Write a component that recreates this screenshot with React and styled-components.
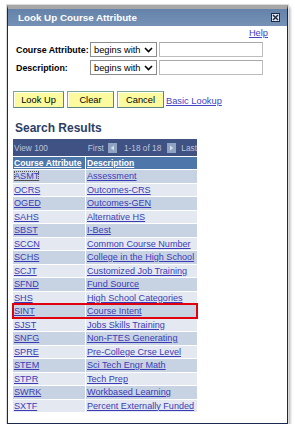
import React from "react";
import styled, { createGlobalStyle } from "styled-components";

const GlobalStyle = createGlobalStyle`
  html, body { margin: 0; padding: 0; background: #ffffff; }
  body { font-family: "Liberation Sans", Arial, sans-serif; }
`;

const Frame = styled.div`
  box-sizing: border-box;
  margin: 5px 0 0 7px;
  width: 281px;
  height: 419px;
  background: #fff;
  border: 1px solid #1b2a4c;
  border-top: 4px solid #a7a7a7;
  box-shadow: 0 0 0 1px #dcdcdc, 2px 2px 3px rgba(0, 0, 0, 0.35);
  display: flex;
  flex-direction: column;
`;

const TitleBar = styled.div`
  height: 17px;
  background: linear-gradient(#6482aa, #7591b5);
  display: flex;
  align-items: center;
  justify-content: space-between;
  padding: 0 7px 0 10px;
`;

const Title = styled.span`
  color: #fff;
  font-weight: bold;
  font-size: 9.8px;
`;

const CloseBox = styled.div`
  width: 7px;
  height: 7px;
  border: 1px solid #1c2a48;
  background: #e4e9f1;
  display: flex;
  align-items: center;
  justify-content: center;
`;

const Body = styled.div`
  padding: 0 0 0 5px;
  display: flex;
  flex-direction: column;
`;

const HelpRow = styled.div`
  margin-top: 2px;
  height: 11px;
  text-align: right;
  padding-right: 19px;
  font-size: 9.3px;
  line-height: 11px;
`;

const Link = styled.a`
  color: ${(p) => p.$color || "#4343c4"};
  text-decoration: underline;
  cursor: pointer;
`;

const Form = styled.div`
  margin: 3px 0 0 3px;
  display: grid;
  grid-template-columns: 74px 67px 106px;
  row-gap: 3px;
  align-items: center;
`;

const Label = styled.div`
  font-weight: bold;
  font-size: 8.9px;
  color: #000;
  white-space: nowrap;
`;

const Select = styled.div`
  box-sizing: border-box;
  height: 15px;
  border: 1px solid #8c8c8c;
  background: #fff;
  display: flex;
  align-items: center;
  justify-content: space-between;
  padding: 0 3px 0 3px;
  font-size: 9.3px;
  color: #000;
  white-space: nowrap;
`;

const TextInput = styled.div`
  box-sizing: border-box;
  margin-left: 2px;
  height: 15px;
  border: 1px solid #bdbdbd;
  border-top-color: #a8a8a8;
  background: #fff;
`;

const ButtonRow = styled.div`
  margin-top: 16px;
  display: flex;
  align-items: center;
  gap: 3px;
`;

const Button = styled.div`
  box-sizing: border-box;
  width: ${(p) => p.$w}px;
  height: 17px;
  background: #fbfa9e;
  border: 1px solid #7fa49c;
  border-right-color: #5d8680;
  border-bottom-color: #5d8680;
  box-shadow: inset 1px 1px 0 #fffff0;
  display: flex;
  align-items: center;
  justify-content: center;
  font-size: 9.3px;
  color: #000;
`;

const ButtonLink = styled.span`
  margin-left: -1px;
  margin-top: 3px;
  font-size: 9.3px;
  white-space: nowrap;
`;

const Heading = styled.div`
  margin: 13px 0 0 2px;
  font-size: 12px;
  line-height: 14px;
  font-weight: bold;
  color: #2c3e66;
`;

const Table = styled.div`
  margin-top: 4px;
  width: 184px;
  background: #fff;
  display: flex;
  flex-direction: column;
`;

const Pager = styled.div`
  height: 17px;
  background: #3f5283;
  display: flex;
  align-items: center;
  font-size: 8.3px;
  color: #bcc6dc;
  padding-left: 1px;
  white-space: nowrap;
`;

const PagerNav = styled.div`
  margin-left: auto;
  display: flex;
  align-items: center;
`;

const PagerText = styled.span`
  flex-shrink: 0;
  margin-left: ${(p) => p.$ml || 0}px;
`;

const ArrowBox = styled.div`
  flex-shrink: 0;
  width: 9px;
  height: 10px;
  margin-left: ${(p) => p.$ml || 0}px;
  background: #8fa4c3;
  display: flex;
  align-items: center;
  justify-content: center;
`;

const HeaderRow = styled.div`
  margin-top: 1px;
  display: grid;
  grid-template-columns: 72px 111px;
  column-gap: 1px;
  margin-bottom: 1px;
`;

const HeaderCell = styled.div`
  height: 12px;
  background: #4d77ab;
  color: #fff;
  font-weight: bold;
  font-size: 8.6px;
  line-height: 12px;
  padding-left: 1px;
  text-decoration: underline;
  white-space: nowrap;
  overflow: hidden;
`;

const Row = styled.div`
  position: relative;
  display: grid;
  grid-template-columns: 72px 111px;
  column-gap: 1px;
  height: 12.5px;
  margin-bottom: 1px;
  ${(p) =>
    p.$highlight &&
    `
    &::after {
      content: "";
      position: absolute;
      left: -1px;
      right: -1px;
      top: -2px;
      bottom: -1px;
      border: 2px solid #e1000e;
      pointer-events: none;
    }
  `}
`;

const Cell = styled.div`
  background: ${(p) => (p.$dark ? "#c7d3e3" : "#e3e8f1")};
  font-size: 9.1px;
  line-height: 12.5px;
  padding-left: 1px;
  white-space: nowrap;
`;

const FocusLink = styled(Link)`
  outline: 1px dotted #555;
  outline-offset: -1px;
`;

const rows = [
  ["ASMT", "Assessment"],
  ["OCRS", "Outcomes-CRS"],
  ["OGED", "Outcomes-GEN"],
  ["SAHS", "Alternative HS"],
  ["SBST", "I-Best"],
  ["SCCN", "Common Course Number"],
  ["SCHS", "College in the High School"],
  ["SCJT", "Customized Job Training"],
  ["SFND", "Fund Source"],
  ["SHS", "High School Categories"],
  ["SINT", "Course Intent"],
  ["SJST", "Jobs Skills Training"],
  ["SNFG", "Non-FTES Generating"],
  ["SPRE", "Pre-College Crse Level"],
  ["STEM", "Sci Tech Engr Math"],
  ["STPR", "Tech Prep"],
  ["SWRK", "Workbased Learning"],
  ["SXTF", "Percent Externally Funded"],
];

const Chevron = () => (
  <svg width="9" height="6" viewBox="0 0 9 6">
    <path d="M1 1 L4.5 4.5 L8 1" fill="none" stroke="#000" strokeWidth="1.6" />
  </svg>
);

const CloseX = () => (
  <svg width="7" height="7" viewBox="0 0 7 7">
    <path d="M1 1 L6 6 M6 1 L1 6" stroke="#1c2a48" strokeWidth="1.5" />
  </svg>
);

const Tri = ({ dir }) => (
  <svg width="5" height="6" viewBox="0 0 5 6">
    {dir === "left" ? (
      <path d="M4 0.5 L0.8 3 L4 5.5 Z" fill="#d6deea" />
    ) : (
      <path d="M1 0.5 L4.2 3 L1 5.5 Z" fill="#d6deea" />
    )}
  </svg>
);

export default function App() {
  return (
    <>
      <GlobalStyle />
      <Frame>
        <TitleBar>
          <Title>Look Up Course Attribute</Title>
          <CloseBox>
            <CloseX />
          </CloseBox>
        </TitleBar>
        <Body>
          <HelpRow>
            <Link>Help</Link>
          </HelpRow>
          <Form>
            <Label>Course Attribute:</Label>
            <Select>
              <span>begins with</span>
              <Chevron />
            </Select>
            <TextInput />
            <Label>Description:</Label>
            <Select>
              <span>begins with</span>
              <Chevron />
            </Select>
            <TextInput />
          </Form>
          <ButtonRow>
            <Button $w={51}>Look Up</Button>
            <Button $w={47}>Clear</Button>
            <Button $w={47}>Cancel</Button>
            <ButtonLink>
              <Link>Basic Lookup</Link>
            </ButtonLink>
          </ButtonRow>
          <Heading>Search Results</Heading>
          <Table>
            <Pager>
              <PagerText>View 100</PagerText>
              <PagerNav>
                <PagerText>First</PagerText>
                <ArrowBox $ml={4}>
                  <Tri dir="left" />
                </ArrowBox>
                <PagerText $ml={7}>1-18 of 18</PagerText>
                <ArrowBox $ml={6}>
                  <Tri dir="right" />
                </ArrowBox>
                <PagerText $ml={5}>Last</PagerText>
              </PagerNav>
            </Pager>
            <HeaderRow>
              <HeaderCell>Course Attribute</HeaderCell>
              <HeaderCell>Description</HeaderCell>
            </HeaderRow>
            {rows.map(([code, desc], i) => (
              <Row key={code} $highlight={code === "SINT"}>
                <Cell $dark={i % 2 === 0}>
                  {i === 0 ? (
                    <FocusLink $color="#3b3bb8">{code}</FocusLink>
                  ) : (
                    <Link $color="#3b3bb8">{code}</Link>
                  )}
                </Cell>
                <Cell $dark={i % 2 === 0}>
                  <Link $color="#3b3bb8">{desc}</Link>
                </Cell>
              </Row>
            ))}
          </Table>
        </Body>
      </Frame>
    </>
  );
}
